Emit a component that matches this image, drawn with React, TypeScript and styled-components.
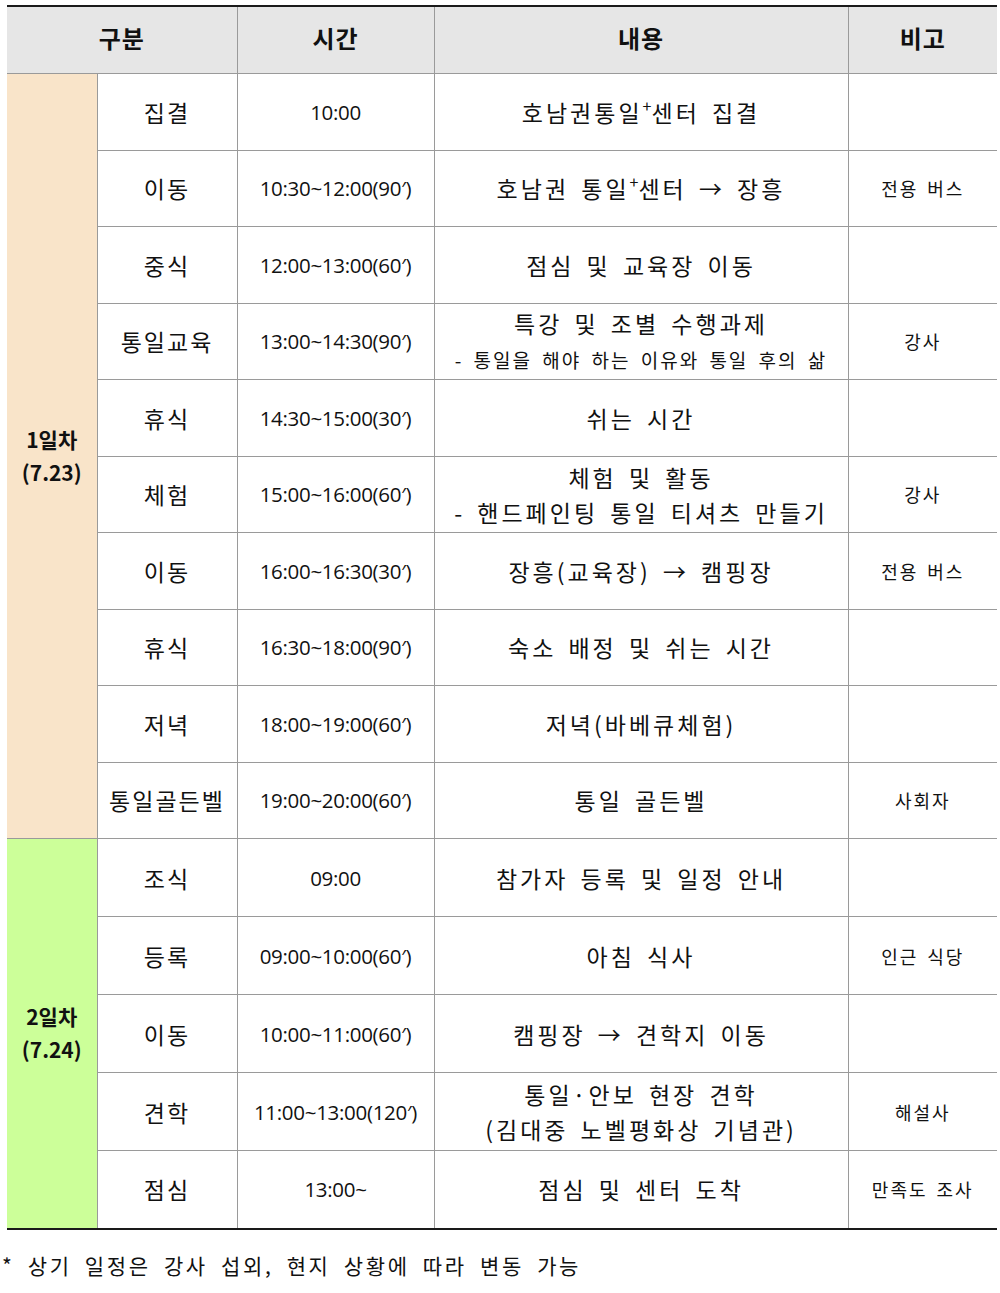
import React from 'react';
import styled, { createGlobalStyle } from 'styled-components';

const GlobalStyle = createGlobalStyle`
  body {
    margin: 0;
    background: #ffffff;
    color: #111111;
    font-family: 'Noto Sans CJK KR', 'Noto Sans', sans-serif;
  }
`;

interface Item {
  kind: string;
  time: string;
  content: React.ReactNode;
  note?: string;
}

interface Day {
  label: string;
  date: string;
  color: string;
  rowHeight: number;
  items: Item[];
}

const Sup = styled.sup`
  font-size: 16px;
  letter-spacing: 0;
  vertical-align: 10px;
  line-height: 0;
`;

const Sub = styled.div<{ $small?: boolean }>`
  font-size: ${(p) => (p.$small ? '19px' : '23px')};
  letter-spacing: ${(p) => (p.$small ? '2px' : '3px')};
  margin-top: ${(p) => (p.$small ? '5px' : '3px')};
`;

const days: Day[] = [
  {
    label: '1일차',
    date: '(7.23)',
    color: '#f9e4c9',
    rowHeight: 76.5,
    items: [
      {
        kind: '집결',
        time: '10:00',
        content: (
          <>
            호남권통일<Sup>+</Sup>센터 집결
          </>
        ),
      },
      {
        kind: '이동',
        time: '10:30~12:00(90′)',
        content: (
          <>
            호남권 통일<Sup>+</Sup>센터 → 장흥
          </>
        ),
        note: '전용 버스',
      },
      { kind: '중식', time: '12:00~13:00(60′)', content: '점심 및 교육장 이동' },
      {
        kind: '통일교육',
        time: '13:00~14:30(90′)',
        content: (
          <>
            <div>특강 및 조별 수행과제</div>
            <Sub $small>- 통일을 해야 하는 이유와 통일 후의 삶</Sub>
          </>
        ),
        note: '강사',
      },
      { kind: '휴식', time: '14:30~15:00(30′)', content: '쉬는 시간' },
      {
        kind: '체험',
        time: '15:00~16:00(60′)',
        content: (
          <>
            <div>체험 및 활동</div>
            <Sub>- 핸드페인팅 통일 티셔츠 만들기</Sub>
          </>
        ),
        note: '강사',
      },
      {
        kind: '이동',
        time: '16:00~16:30(30′)',
        content: '장흥(교육장) → 캠핑장',
        note: '전용 버스',
      },
      { kind: '휴식', time: '16:30~18:00(90′)', content: '숙소 배정 및 쉬는 시간' },
      { kind: '저녁', time: '18:00~19:00(60′)', content: '저녁(바베큐체험)' },
      {
        kind: '통일골든벨',
        time: '19:00~20:00(60′)',
        content: '통일 골든벨',
        note: '사회자',
      },
    ],
  },
  {
    label: '2일차',
    date: '(7.24)',
    color: '#ccff99',
    rowHeight: 78,
    items: [
      { kind: '조식', time: '09:00', content: '참가자 등록 및 일정 안내' },
      {
        kind: '등록',
        time: '09:00~10:00(60′)',
        content: '아침 식사',
        note: '인근 식당',
      },
      { kind: '이동', time: '10:00~11:00(60′)', content: '캠핑장 → 견학지 이동' },
      {
        kind: '견학',
        time: '11:00~13:00(120′)',
        content: (
          <>
            <div>통일·안보 현장 견학</div>
            <Sub>(김대중 노벨평화상 기념관)</Sub>
          </>
        ),
        note: '해설사',
      },
      {
        kind: '점심',
        time: '13:00~',
        content: '점심 및 센터 도착',
        note: '만족도 조사',
      },
    ],
  },
];

const App: React.FC = () => {
  return (
    <>
      <GlobalStyle />
      <Page>
        <Schedule>
          <colgroup>
            <col style={{ width: 90 }} />
            <col style={{ width: 140 }} />
            <col style={{ width: 197 }} />
            <col style={{ width: 414 }} />
            <col style={{ width: 149 }} />
          </colgroup>
          <thead>
            <tr>
              <HeadCell colSpan={2}>구분</HeadCell>
              <HeadCell>시간</HeadCell>
              <HeadCell>내용</HeadCell>
              <HeadCell>비고</HeadCell>
            </tr>
          </thead>
          <tbody>
            {days.map((day, di) =>
              day.items.map((item, i) => (
                <Row
                  key={`${di}-${i}`}
                  style={{ height: day.rowHeight }}
                  $last={di === days.length - 1 && i === day.items.length - 1}
                >
                  {i === 0 && (
                    <DayCell rowSpan={day.items.length} $bg={day.color}>
                      {day.label}
                      <br />
                      {day.date}
                    </DayCell>
                  )}
                  <KindCell>{item.kind}</KindCell>
                  <TimeCell>{item.time}</TimeCell>
                  <ContentCell>{item.content}</ContentCell>
                  <NoteCell>{item.note}</NoteCell>
                </Row>
              )),
            )}
          </tbody>
        </Schedule>
        <Footnote>* 상기 일정은 강사 섭외, 현지 상황에 따라 변동 가능</Footnote>
      </Page>
    </>
  );
};

const Page = styled.main`
  width: 990px;
  padding: 5px 0 0 7px;
`;

const Schedule = styled.table`
  width: 990px;
  table-layout: fixed;
  border-collapse: collapse;
  border-top: 2px solid #1a1a1a;
  border-bottom: 2px solid #1a1a1a;
`;

const Cell = styled.td`
  border: 1px solid #9a9a9a;
  text-align: center;
  vertical-align: middle;
  padding: 0;
  &:first-child {
    border-left: none;
  }
  &:last-child {
    border-right: none;
  }
`;

const HeadCell = styled.th`
  height: 61px;
  background: #e6e6e6;
  border: 1px solid #9a9a9a;
  border-top: none;
  font-size: 24px;
  font-weight: 700;
  letter-spacing: 1px;
  padding: 0 0 5px;
  &:first-child {
    border-left: none;
  }
  &:last-child {
    border-right: none;
  }
`;

const Row = styled.tr<{ $last?: boolean }>`
  td {
    border-bottom-color: ${(p) => (p.$last ? '#1a1a1a' : '#9a9a9a')};
  }
`;

const DayCell = styled(Cell)<{ $bg: string }>`
  background: ${(p) => p.$bg};
  font-size: 21px;
  font-weight: 700;
  line-height: 33px;
  letter-spacing: 0;
`;

const KindCell = styled(Cell)`
  font-size: 23px;
  letter-spacing: 2px;
`;

const TimeCell = styled(Cell)`
  font-family: 'Open Sans', 'Noto Sans', sans-serif;
  font-size: 20.5px;
  letter-spacing: -0.3px;
`;

const ContentCell = styled(Cell)`
  font-size: 23px;
  letter-spacing: 3px;
  word-spacing: 4px;
  line-height: 32px;
`;

const NoteCell = styled(Cell)`
  font-size: 18px;
  letter-spacing: 2px;
  word-spacing: 3px;
`;

const Footnote = styled.p`
  margin: 20px 0 0 -5px;
  font-size: 21px;
  letter-spacing: 2.6px;
  word-spacing: 6px;
`;

export default App;
